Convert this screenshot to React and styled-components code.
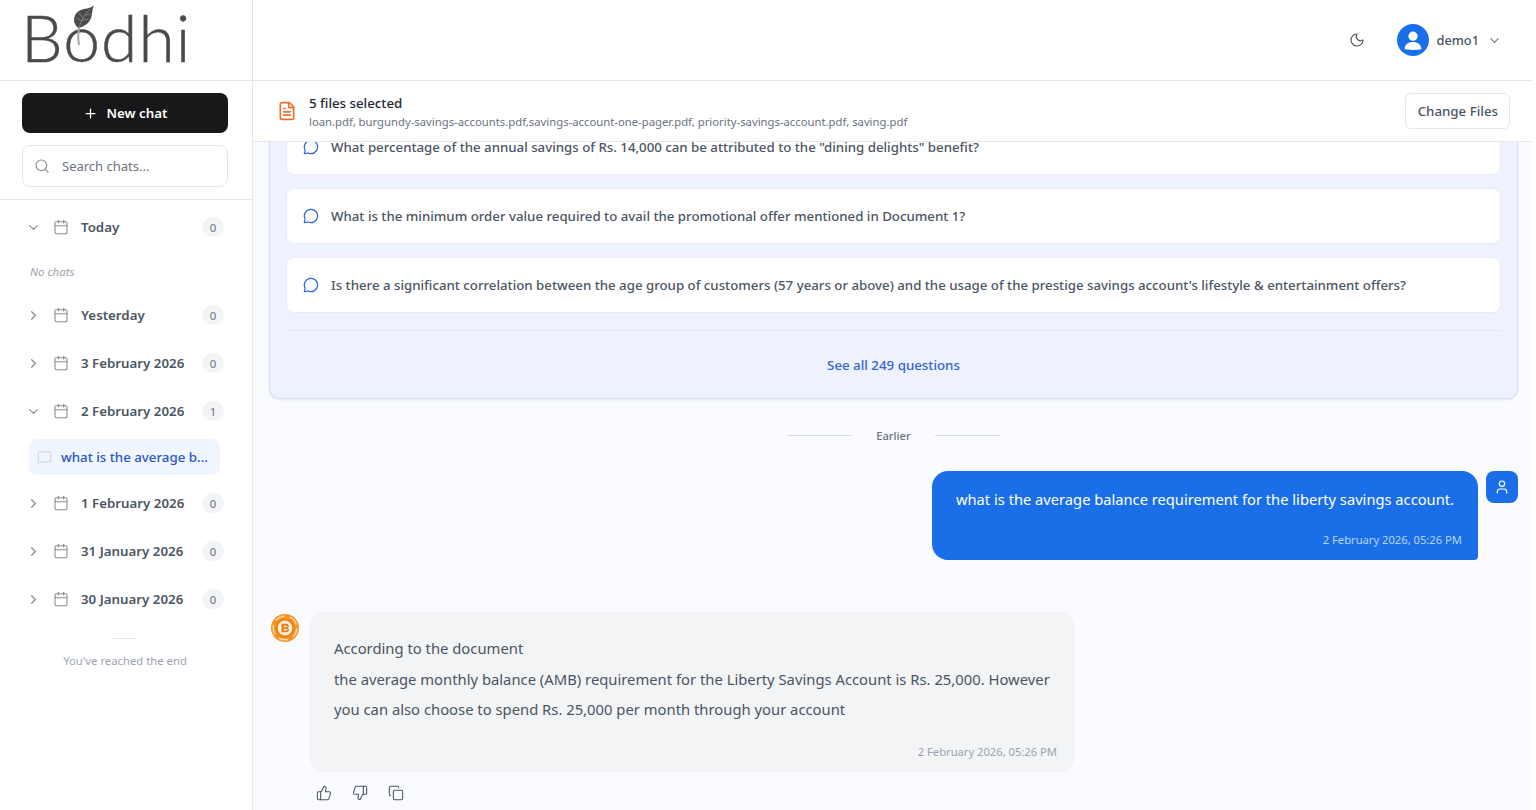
import React from 'react';
import styled, { createGlobalStyle } from 'styled-components';
import {
  Plus, Search, ChevronDown, ChevronRight, Calendar, MessageSquare, MessageCircle,
  Moon, FileText, User, ThumbsUp, ThumbsDown, Copy,
} from 'lucide-react';

const GlobalStyle = createGlobalStyle`
  html, body { margin: 0; padding: 0; height: 100%; overflow: hidden; }
  body { font-family: "Noto Sans", "Liberation Sans", sans-serif; background: #fff; color: #374151; }
  * { box-sizing: border-box; }
`;

const groups = [
  { label: 'Today', count: 0, open: true, empty: true },
  { label: 'Yesterday', count: 0 },
  { label: '3 February 2026', count: 0 },
  { label: '2 February 2026', count: 1, open: true, chat: 'what is the average b...' },
  { label: '1 February 2026', count: 0 },
  { label: '31 January 2026', count: 0 },
  { label: '30 January 2026', count: 0 },
];

const questions = [
  'What percentage of the annual savings of Rs. 14,000 can be attributed to the "dining delights" benefit?',
  'What is the minimum order value required to avail the promotional offer mentioned in Document 1?',
  "Is there a significant correlation between the age group of customers (57 years or above) and the usage of the prestige savings account's lifestyle & entertainment offers?",
];

function Logo() {
  return (
    <LogoBox>
      <LogoWord>Bodhi</LogoWord>
      <LeafSvg viewBox="0 0 24 44" width="24" height="44">
        <path d="M24 2 C21 6 14 5 9 8 C4 11 3 17 5 21 C6 23 8 25 9 25 C14 23 19 21 21 15 C22.5 11 22 6 24 2 Z" fill="#4a4a4a" />
        <path d="M9 25 C11 18 14 13 20 6 M11.5 18 L6.5 15 M13 15 L9 10 M12.5 17 L19 16 M15 12 L20.5 11" stroke="#9a9a9a" strokeWidth="0.7" fill="none" />
        <path d="M9 25 C8 30 8 36 9 42" stroke="#a8a8a8" strokeWidth="2" fill="none" />
      </LeafSvg>
    </LogoBox>
  );
}

function BankBadge() {
  return (
    <svg width="30" height="30" viewBox="0 0 30 30">
      <circle cx="15" cy="15" r="14" fill="#f59323" />
      <circle cx="15" cy="15" r="11.8" fill="none" stroke="#fcd79c" strokeWidth="1.5" strokeDasharray="10 5" />
      <circle cx="15" cy="15" r="9.4" fill="#ee7f16" />
      <circle cx="15" cy="15" r="7.4" fill="#fff1dc" />
      <path d="M11.5 10.8h5.2a2.1 2.1 0 0 1 .9 4 2.3 2.3 0 0 1-.7 4.4h-5.4z M13.6 12.7v1.5h2.6a.75.75 0 0 0 0-1.5z M13.6 15.9v1.6h3a.8.8 0 0 0 0-1.6z" fill="#ea7a12" fillRule="evenodd" />
    </svg>
  );
}

function Sidebar() {
  return (
    <Side>
      <LogoArea><Logo /></LogoArea>
      <SideTop>
        <NewChat><Plus size={15} strokeWidth={2} />New chat</NewChat>
        <SearchBox><Search size={16} color="#8b8f96" strokeWidth={1.8} /><span>Search chats...</span></SearchBox>
      </SideTop>
      <GroupList>
        {groups.map((g) => (
          <Group key={g.label}>
            <GroupRow>
              <Chevron>{g.open ? <ChevronDown size={15} /> : <ChevronRight size={15} />}</Chevron>
              <Calendar size={16} color="#8a8d93" strokeWidth={1.6} />
              <GroupLabel>{g.label}</GroupLabel>
              <Count>{g.count}</Count>
            </GroupRow>
            {g.empty && <NoChats>No chats</NoChats>}
            {g.chat && (
              <ChatItem>
                <MessageSquare size={15} color="#c7ccd4" strokeWidth={1.5} />
                <span>{g.chat}</span>
              </ChatItem>
            )}
          </Group>
        ))}
        <EndRule />
        <EndText>You've reached the end</EndText>
      </GroupList>
    </Side>
  );
}

function Main() {
  return (
    <Content>
      <Header>
        <Moon size={16} color="#55595f" strokeWidth={1.8} />
        <UserMenu>
          <AvatarCircle>
            <svg width="24" height="24" viewBox="0 0 24 24" fill="#fff">
              <circle cx="12" cy="8.2" r="4.6" />
              <path d="M3.6 21c.4-4.8 3.6-7 8.4-7s8 2.2 8.4 7c-2 1.2-14.8 1.2-16.8 0z" />
            </svg>
          </AvatarCircle>
          <UserName>demo1</UserName>
          <ChevronDown size={15} color="#7b7f86" />
        </UserMenu>
      </Header>
      <FilesBar>
        <FileText size={20} color="#e9702a" strokeWidth={2} />
        <FilesInfo>
          <FilesTitle>5 files selected</FilesTitle>
          <FilesNames>loan.pdf, burgundy-savings-accounts.pdf,savings-account-one-pager.pdf, priority-savings-account.pdf, saving.pdf</FilesNames>
        </FilesInfo>
        <ChangeFiles>Change Files</ChangeFiles>
      </FilesBar>
      <Scroll>
        <SuggestPanel>
          {questions.map((q) => (
            <Question key={q}>
              <MessageCircle size={16} color="#2563eb" strokeWidth={1.8} />
              <span>{q}</span>
            </Question>
          ))}
          <SeeAll>See all 249 questions</SeeAll>
        </SuggestPanel>
        <Divider><i /><span>Earlier</span><i /></Divider>
        <UserRow>
          <UserBubble>
            <div>what is the average balance requirement for the liberty savings account.</div>
            <UserTime>2 February 2026, 05:26 PM</UserTime>
          </UserBubble>
          <UserIcon><User size={16} color="#fff" strokeWidth={1.8} /></UserIcon>
        </UserRow>
        <BotRow>
          <BotAvatar><BankBadge /></BotAvatar>
          <BotColumn>
            <BotBubble>
              <p>According to the document</p>
              <p>the average monthly balance (AMB) requirement for the Liberty Savings Account is Rs. 25,000. However you can also choose to spend Rs. 25,000 per month through your account</p>
              <BotTime>2 February 2026, 05:26 PM</BotTime>
            </BotBubble>
            <Actions>
              <ThumbsUp size={16} strokeWidth={1.6} />
              <ThumbsDown size={16} strokeWidth={1.6} />
              <Copy size={16} strokeWidth={1.6} />
            </Actions>
          </BotColumn>
        </BotRow>
      </Scroll>
    </Content>
  );
}

export default function App() {
  return (
    <Page>
      <GlobalStyle />
      <Sidebar />
      <Main />
    </Page>
  );
}

const Page = styled.div`
  display: flex;
  width: 100vw;
  height: 100vh;
  overflow: hidden;
  padding-right: 3px;
`;

const Side = styled.aside`
  width: 253px;
  flex: none;
  border-right: 1px solid #e5e7eb;
  background: #fff;
  display: flex;
  flex-direction: column;
`;

const LogoArea = styled.div`
  height: 81px;
  border-bottom: 1px solid #e5e7eb;
  padding-left: 21px;
`;

const LogoBox = styled.div`
  position: relative;
  width: 200px;
  height: 80px;
`;

const LogoWord = styled.div`
  font-family: "Lato", "Noto Sans", sans-serif;
  font-size: 66px;
  font-weight: 300;
  line-height: 66px;
  padding-top: 4px;
  color: #4a4a4a;
  letter-spacing: 1px;
  -webkit-text-stroke: 0.5px #4a4a4a;
`;

const LeafSvg = styled.svg`
  position: absolute;
  left: 49px;
  top: 3px;
`;

const SideTop = styled.div`
  padding: 12px 24px 12px 22px;
  border-bottom: 1px solid #e5e7eb;
  display: flex;
  flex-direction: column;
  gap: 12px;
`;

const NewChat = styled.button`
  height: 40px;
  border: 0;
  border-radius: 8px;
  background: #18181b;
  color: #fff;
  font: 600 13.3px "Noto Sans", sans-serif;
  display: flex;
  align-items: center;
  justify-content: center;
  gap: 9px;
`;

const SearchBox = styled.div`
  height: 42px;
  border: 1px solid #e5e7eb;
  border-radius: 8px;
  display: flex;
  align-items: center;
  gap: 12px;
  padding-left: 11px;
  font-size: 13px;
  color: #6b7280;
`;

const GroupList = styled.div`
  padding: 3px 28px 0 26px;
`;

const Group = styled.div``;

const GroupRow = styled.div`
  height: 48px;
  display: flex;
  align-items: center;
`;

const Chevron = styled.span`
  width: 27px;
  display: flex;
  color: #8a8d93;
`;

const GroupLabel = styled.span`
  margin-left: 12px;
  flex: 1;
  font-size: 13.3px;
  font-weight: 600;
  color: #4b5563;
`;

const Count = styled.span`
  min-width: 22px;
  height: 20px;
  border-radius: 10px;
  background: #f3f4f6;
  font-size: 11.4px;
  color: #6b7280;
  display: flex;
  align-items: center;
  justify-content: center;
`;

const NoChats = styled.div`
  height: 40px;
  padding-left: 4px;
  font-size: 11.4px;
  font-style: italic;
  color: #9ca3af;
  display: flex;
  align-items: center;
`;

const ChatItem = styled.div`
  height: 36px;
  margin: 4px 4px 4px 3px;
  border-radius: 8px;
  background: #eff6ff;
  display: flex;
  align-items: center;
  gap: 9px;
  padding-left: 8px;
  font-size: 13.3px;
  font-weight: 500;
  color: #2b55c5;
  white-space: nowrap;
`;

const EndRule = styled.div`
  width: 24px;
  height: 1px;
  background: #e5e7eb;
  margin: 15px auto 0;
`;

const EndText = styled.div`
  margin-top: 14px;
  text-align: center;
  font-size: 11.3px;
  color: #9ca3af;
`;

const Content = styled.main`
  flex: 1;
  min-width: 0;
  display: flex;
  flex-direction: column;
  background: #fafbff;
`;

const Header = styled.header`
  height: 81px;
  flex: none;
  background: #fff;
  border-bottom: 1px solid #e5e7eb;
  display: flex;
  align-items: center;
  justify-content: flex-end;
  padding-right: 31px;
  gap: 32px;
`;

const UserMenu = styled.div`
  display: flex;
  align-items: center;
  gap: 8px;
`;

const AvatarCircle = styled.div`
  width: 32px;
  height: 32px;
  border-radius: 50%;
  background: #1a6fe8;
  display: flex;
  align-items: center;
  justify-content: center;
`;

const UserName = styled.span`
  margin-left: -1px;
  font-size: 12.8px;
  font-weight: 500;
  color: #4b5563;
`;

const FilesBar = styled.div`
  height: 61px;
  flex: none;
  background: #fff;
  border-bottom: 1px solid #e5e7eb;
  display: flex;
  align-items: center;
  padding: 0 23px 0 24px;
  gap: 12px;
`;

const FilesInfo = styled.div`
  flex: 1;
  min-width: 0;
  padding-top: 2px;
`;

const FilesTitle = styled.div`
  font-size: 13.3px;
  font-weight: 500;
  line-height: 20px;
  color: #1f2937;
`;

const FilesNames = styled.div`
  font-size: 11.3px;
  line-height: 18px;
  color: #6b7280;
`;

const ChangeFiles = styled.button`
  height: 36px;
  padding: 0 11px 0 12px;
  border: 1px solid #e5e7eb;
  border-radius: 6px;
  background: #fff;
  font: 500 13.3px "Noto Sans", sans-serif;
  color: #4b5563;
`;

const Scroll = styled.div`
  flex: 1;
  min-height: 0;
  overflow: hidden;
  padding: 0 15px 0 16px;
`;

const SuggestPanel = styled.section`
  margin-top: -40px;
  padding: 16px 16px 0;
  border: 1px solid #d5e0f5;
  border-radius: 10px;
  background: #eef2fd;
  box-shadow: 0 1px 2px rgba(60, 90, 160, 0.12);
  display: flex;
  flex-direction: column;
`;

const Question = styled.div`
  height: 56px;
  flex: none;
  margin-bottom: 13px;
  padding: 0 16px;
  background: #fff;
  border: 1px solid #e7ebf3;
  border-radius: 8px;
  display: flex;
  align-items: center;
  gap: 12px;
  font-size: 13.25px;
  font-weight: 500;
  color: #4b5563;
  & > span { white-space: nowrap; }
`;

const SeeAll = styled.div`
  margin-top: 4px;
  border-top: 1px solid #e2e8f5;
  height: 68px;
  display: flex;
  align-items: center;
  justify-content: center;
  font-size: 13.3px;
  font-weight: 500;
  color: #3563d8;
`;

const Divider = styled.div`
  margin-top: 29px;
  display: flex;
  align-items: center;
  justify-content: center;
  gap: 24px;
  font-size: 11.2px;
  font-weight: 500;
  color: #6b7280;
  & > i { width: 65px; height: 1px; background: #d9dce1; }
`;

const UserRow = styled.div`
  margin-top: 28px;
  display: flex;
  justify-content: flex-end;
  align-items: flex-start;
  gap: 8px;
`;

const UserBubble = styled.div`
  width: 546px;
  height: 89px;
  border-radius: 16px 16px 4px 16px;
  background: #1a6fe8;
  color: #fff;
  padding: 16px 24px 0;
  font-size: 14.7px;
  line-height: 24px;
  white-space: nowrap;
`;

const UserTime = styled.div`
  margin-top: 21px;
  margin-right: -8px;
  text-align: right;
  font-size: 11.2px;
  line-height: 16px;
  color: #b9d3fa;
`;

const UserIcon = styled.div`
  width: 32px;
  height: 32px;
  border-radius: 8px;
  background: #1a6fe8;
  display: flex;
  align-items: center;
  justify-content: center;
`;

const BotRow = styled.div`
  margin-top: 52px;
  display: flex;
  align-items: flex-start;
  gap: 8px;
`;

const BotAvatar = styled.div`
  width: 32px;
  height: 32px;
  display: flex;
  align-items: center;
  justify-content: center;
`;

const BotColumn = styled.div`
  width: 766px;
`;

const BotBubble = styled.div`
  height: 160px;
  border-radius: 16px;
  background: #f3f4f6;
  padding: 21px 18px 0 25px;
  font-size: 14.8px;
  line-height: 30.5px;
  color: #4b5563;
  & > p { margin: 0; }
`;

const BotTime = styled.div`
  margin-top: 19px;
  text-align: right;
  font-size: 11.2px;
  line-height: 16px;
  color: #9ca3af;
`;

const Actions = styled.div`
  margin-top: 13px;
  padding-left: 7px;
  display: flex;
  gap: 20px;
  color: #4b5563;
`;
